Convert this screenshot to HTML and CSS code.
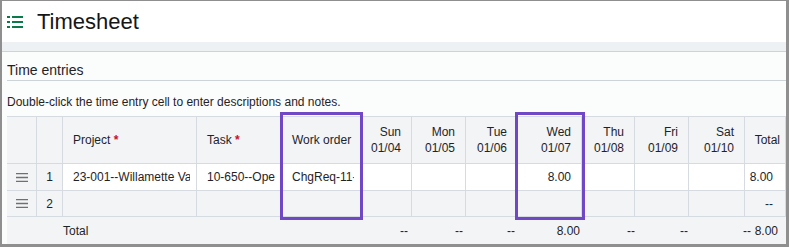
FILE: index.html
```html
<!DOCTYPE html>
<html lang="en">
<head>
  <meta charset="UTF-8">
  <title>Timesheet</title>
  <link rel="stylesheet" href="styles.css">
</head>
<body>
  <div class="page">
    <div class="page-header">
      <svg class="list-icon" width="16" height="12" viewBox="0 0 16 12">
        <rect x="0" y="0" width="3" height="2"/>
        <rect x="5" y="0" width="11" height="2"/>
        <rect x="0" y="5" width="3" height="2"/>
        <rect x="5" y="5" width="11" height="2"/>
        <rect x="0" y="10" width="3" height="2"/>
        <rect x="5" y="10" width="11" height="2"/>
      </svg>
      <h1>Timesheet</h1>
    </div>
    <div class="band"></div>

    <div class="section">
      <h2>Time entries</h2>
      <p class="hint">Double-click the time entry cell to enter descriptions and notes.</p>

      <div class="grid-wrap">
        <table class="entries">
          <colgroup>
            <col style="width:30px"><col style="width:26px"><col style="width:134px">
            <col style="width:85px"><col style="width:79px"><col style="width:51px">
            <col style="width:54px"><col style="width:52px"><col style="width:64px">
            <col style="width:53px"><col style="width:54px"><col style="width:56px">
            <col style="width:41px">
          </colgroup>
          <thead>
            <tr>
              <th></th>
              <th></th>
              <th class="txt">Project <span class="req">*</span></th>
              <th class="txt">Task <span class="req">*</span></th>
              <th class="txt">Work order</th>
              <th class="day">Sun<br>01/04</th>
              <th class="day">Mon<br>01/05</th>
              <th class="day">Tue<br>01/06</th>
              <th class="day">Wed<br>01/07</th>
              <th class="day">Thu<br>01/08</th>
              <th class="day">Fri<br>01/09</th>
              <th class="day">Sat<br>01/10</th>
              <th class="sum">Total</th>
            </tr>
          </thead>
          <tbody>
            <tr class="row-1">
              <td class="handle"><svg width="12" height="9" viewBox="0 0 12 9"><path d="M0 .6h12M0 4.5h12M0 8.4h12"/></svg></td>
              <td class="num">1</td>
              <td class="txt"><div class="clip">23-001--Willamette Valley</div></td>
              <td class="txt"><div class="clip">10-650--Operations</div></td>
              <td class="txt"><div class="clip">ChgReq-11-0042</div></td>
              <td class="day"></td>
              <td class="day"></td>
              <td class="day"></td>
              <td class="day">8.00</td>
              <td class="day"></td>
              <td class="day"></td>
              <td class="day"></td>
              <td class="sum">8.00</td>
            </tr>
            <tr class="row-2">
              <td class="handle"><svg width="12" height="9" viewBox="0 0 12 9"><path d="M0 .6h12M0 4.5h12M0 8.4h12"/></svg></td>
              <td class="num">2</td>
              <td class="txt"></td>
              <td class="txt"></td>
              <td class="txt"></td>
              <td class="day"></td>
              <td class="day"></td>
              <td class="day"></td>
              <td class="day"></td>
              <td class="day"></td>
              <td class="day"></td>
              <td class="day"></td>
              <td class="sum">--</td>
            </tr>
          </tbody>
        </table>

        <div class="totals">
          <span></span>
          <span class="label">Total</span>
          <span>--</span>
          <span>--</span>
          <span>--</span>
          <span>8.00</span>
          <span>--</span>
          <span>--</span>
          <span>--</span>
          <span>8.00</span>
        </div>

        <div class="callout callout-wo"></div>
        <div class="callout callout-wed"></div>
      </div>
    </div>
  </div>
</body>
</html>
```

FILE: styles.css
```css
* {
  box-sizing: border-box;
}

body {
  margin: 0;
  height: 247px;
  padding: 1px 3px 3px 2px;
  background: #8f8f8f;
  font-family: "Liberation Sans", Arial, sans-serif;
  color: #1f2328;
}

.page {
  height: 243px;
  background: #fbfcfc;
  overflow: hidden;
}

/*===============================
Header
=============*/

.page-header {
  height: 41px;
  display: flex;
  align-items: center;
  padding-left: 5px;
  background: #fff;
}

.list-icon {
  fill: #0b7a4b;
  margin-right: 14px;
  margin-top: 1px;
}

.page-header h1 {
  margin: 0;
  font-size: 22px;
  font-weight: normal;
  color: #161616;
}

.band {
  height: 10px;
  background: #eef1f3;
  border-bottom: 1px solid #ccd4d9;
}

/*===============================
Time entries
=============*/

.section {
  padding-left: 5px;
}

.section h2 {
  margin: 0;
  padding: 10px 0 2px;
  font-size: 14px;
  line-height: 16px;
  font-weight: normal;
  border-bottom: 1px solid #ccd4d9;
}

.hint {
  margin: 13px 0 6px;
  font-size: 12px;
  line-height: 16px;
}

.grid-wrap {
  position: relative;
  width: 779px;
}

.entries {
  table-layout: fixed;
  width: 779px;
  border-collapse: separate;
  border-spacing: 0;
  border-top: 1px solid #d5dbe0;
  font-size: 12px;
}

.entries th,
.entries td {
  border-right: 1px solid #d5dbe0;
  border-bottom: 1px solid #d5dbe0;
  padding: 0;
  white-space: nowrap;
  vertical-align: middle;
  font-weight: normal;
}

.entries th {
  height: 47px;
  background: #f2f4f6;
  line-height: 16px;
}

.row-1 td {
  height: 27px;
  background: #fff;
}

.row-2 td {
  height: 26px;
  background: #f2f4f6;
}

.entries .handle,
.entries .num {
  background: #f2f4f6;
  text-align: center;
}

.handle svg {
  display: block;
  margin: 0 auto;
  stroke: #707070;
  stroke-width: 1.3;
}

.entries .txt {
  text-align: left;
  padding: 0 6px 0 10px;
}

.clip {
  overflow: hidden;
}

.req {
  color: #c8102e;
  font-weight: bold;
}

.entries .day {
  text-align: right;
  padding-right: 10px;
}

.entries th.sum {
  text-align: right;
  padding: 0 5px 0 6px;
}

.entries td.sum {
  text-align: right;
  padding-right: 12px;
}

/*===============================
Totals row
=============*/

.totals {
  display: grid;
  grid-template-columns: 56px 295px 50px 55px 52px 65px 55px 53px 63px 27px;
  height: 27px;
  align-items: center;
  background: #f2f4f6;
  font-size: 12px;
  text-align: right;
}

.totals .label {
  text-align: left;
}

/*===============================
Callouts
=============*/

.callout {
  position: absolute;
  top: -4px;
  height: 108px;
  border: 3px solid #7048c6;
}

.callout-wo {
  left: 273px;
  width: 83px;
}

.callout-wed {
  left: 508px;
  width: 70px;
}
```
